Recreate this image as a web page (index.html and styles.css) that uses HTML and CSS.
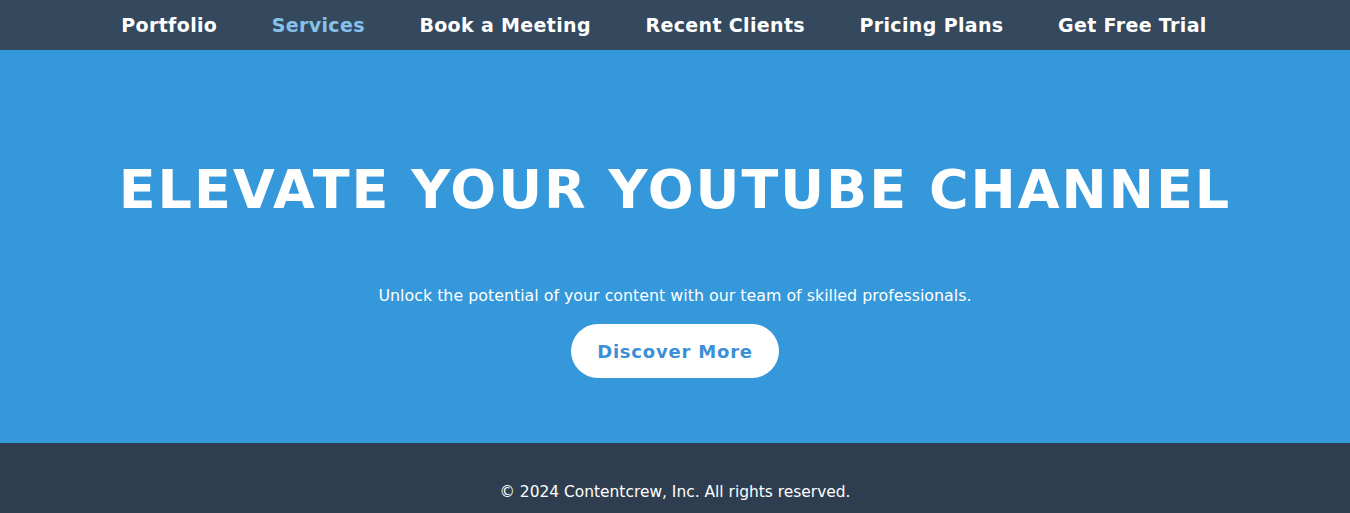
FILE: index.html
```html
<!DOCTYPE html>
<html lang="en">
<head>
<meta charset="utf-8">
<title>Contentcrew</title>
<link rel="stylesheet" href="styles.css">
</head>
<body>
<nav class="nav">
  <ul class="nav-list">
    <li><a class="nav-link" href="#">Portfolio</a></li>
    <li><a class="nav-link active" href="#">Services</a></li>
    <li><a class="nav-link" href="#">Book a Meeting</a></li>
    <li><a class="nav-link" href="#">Recent Clients</a></li>
    <li><a class="nav-link" href="#">Pricing Plans</a></li>
    <li><a class="nav-link" href="#">Get Free Trial</a></li>
  </ul>
</nav>
<section class="hero">
  <h1 class="hero-title">ELEVATE YOUR YOUTUBE CHANNEL</h1>
  <p class="hero-sub">Unlock the potential of your content with our team of skilled professionals.</p>
  <a class="hero-btn" href="#">Discover More</a>
</section>
<footer class="footer">
  <p class="footer-text">© 2024 Contentcrew, Inc. All rights reserved.</p>
</footer>
</body>
</html>
```
FILE: styles.css
```css
* { box-sizing: border-box; }
body {
  margin: 0;
  font-family: "DejaVu Sans", "Noto Sans", sans-serif;
  background: #2c3e50;
}
.nav {
  background: #34495e;
  height: 50px;
  display: flex;
  justify-content: center;
  padding-right: 22px;
}
.nav-list {
  list-style: none;
  margin: 0;
  padding: 0;
  display: flex;
  align-items: center;
  gap: 54.5px;
}
.nav-link {
  color: #ffffff;
  text-decoration: none;
  font-weight: bold;
  font-size: 19px;
  letter-spacing: 0.35px;
  line-height: 50px;
}
.nav-link.active { color: #85c1e9; }
.hero {
  background: #3498db;
  height: 393px;
  display: flex;
  flex-direction: column;
  align-items: center;
  padding-top: 110px;
  color: #fff;
}
.hero-title {
  margin: 0;
  font-size: 54px;
  line-height: 60px;
  font-weight: bold;
  letter-spacing: 2px;
}
.hero-sub {
  margin: 66px 0 0;
  font-size: 15.85px;
  line-height: 20px;
}
.hero-btn {
  margin-top: 18px;
  height: 54px;
  padding: 0 26px;
  border-radius: 27px;
  background: #fff;
  color: #3a8fd6;
  font-weight: bold;
  font-size: 18px;
  line-height: 55px;
  text-decoration: none;
  letter-spacing: 0.8px;
}
.footer {
  background: #2e3e50;
  height: 70px;
  padding-top: 39px;
}
.footer-text {
  margin: 0;
  text-align: center;
  color: #fff;
  font-size: 15.45px;
  line-height: 20px;
}
```
